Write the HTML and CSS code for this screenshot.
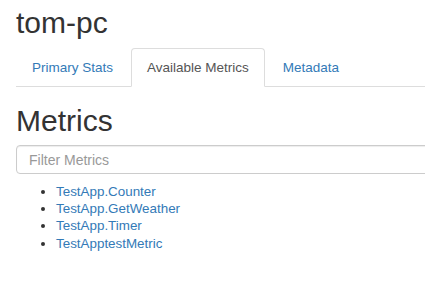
FILE: index.html
```html
<!DOCTYPE HTML>
<html>
<head>
<title>tom-pc</title>
<meta charset="utf-8" />
<link rel="stylesheet" href="styles.css">
</head>
<body>
<div class="page">
  <h2 class="host">tom-pc</h2>
  <ul class="tabs">
    <li><a href="javascript:;">Primary Stats</a></li>
    <li class="active"><a href="javascript:;">Available Metrics</a></li>
    <li><a href="javascript:;">Metadata</a></li>
  </ul>
  <h1 class="title">Metrics</h1>
  <input class="filter" type="text" placeholder="Filter Metrics" />
  <ul class="metrics">
    <li><a href="javascript:;">TestApp.Counter</a></li>
    <li><a href="javascript:;">TestApp.GetWeather</a></li>
    <li><a href="javascript:;">TestApp.Timer</a></li>
    <li><a href="javascript:;">TestApptestMetric</a></li>
  </ul>
</div>
</body>
</html>
```

FILE: styles.css
```css
*{
  margin:0;
  padding:0;
  box-sizing:border-box;
}
html,body{
  overflow:hidden;
}
body{
  font-family:"Liberation Sans", Arial, sans-serif;
  font-size:14px;
  line-height:17px;
  color:#333;
  background:#fff;
}
.page{
  width:600px;
  padding:0 16px;
}
a{
  color:#337ab7;
  text-decoration:none;
}
.host{
  font-size:30px;
  line-height:33px;
  font-weight:normal;
  margin:6px 0 9px;
}
.tabs{
  display:flex;
  list-style:none;
  border-bottom:1px solid #ddd;
  font-size:13.5px;
}
.tabs li{
  margin-bottom:-1px;
}
.tabs li a{
  display:block;
  padding:10px 15px;
  margin-right:2px;
  border:1px solid transparent;
  border-radius:4px 4px 0 0;
}
.tabs li.active a{
  color:#555;
  background:#fff;
  border-color:#ddd #ddd transparent;
}
.title{
  font-size:30px;
  line-height:33px;
  font-weight:normal;
  margin:17px 0 8px;
}
.filter{
  display:block;
  width:100%;
  height:29px;
  padding:5px 12px;
  font-family:inherit;
  font-size:14px;
  color:#555;
  border:1px solid #ccc;
  border-radius:4px;
  box-shadow:inset 0 1px 1px rgba(0,0,0,.075);
}
.filter::placeholder{
  color:#999;
}
.metrics{
  margin-top:9px;
  padding-left:40px;
  font-size:13.4px;
  line-height:17.2px;
}
```
